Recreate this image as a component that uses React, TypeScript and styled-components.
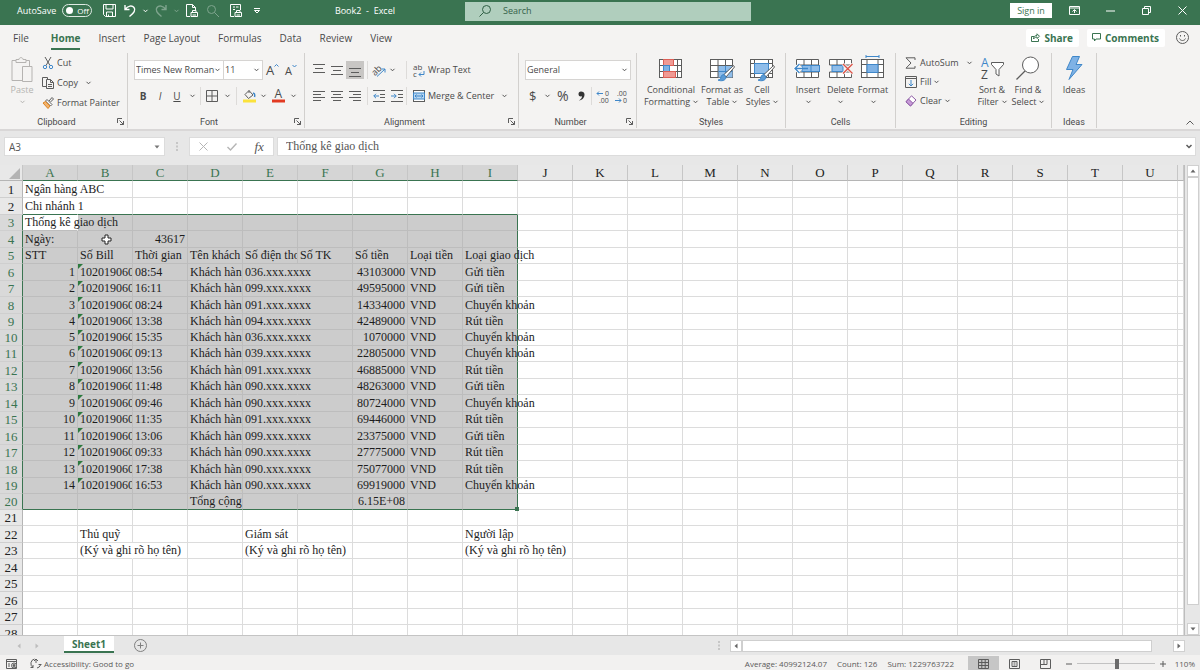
import React from 'react';
import styled, { createGlobalStyle, css } from 'styled-components';

const green = '#3a7451';
const ink = '#4a4a4a';
const blue = '#3f87c9';
const uiFont = "'Open Sans', 'Liberation Sans', sans-serif";
const labelFont = "Roboto, 'Liberation Sans', sans-serif";
const sheetFont = "'Liberation Serif', serif";

const Global = createGlobalStyle`
  * { box-sizing: border-box; }
  body { margin: 0; font-family: ${uiFont}; font-size: 9px; line-height: 12px; color: ${ink}; }
  button, input, select { font: inherit; color: inherit; margin: 0; padding: 0; border: 0; background: none; border-radius: 0; outline: none; }
  button { display: inline-flex; align-items: center; justify-content: center; white-space: nowrap; }
  svg { display: block; flex: none; overflow: visible; }
`;

/* ---------- shell ---------- */
const Window = styled.div`
  display: flex;
  flex-direction: column;
  height: 100vh;
  overflow: hidden;
  background: #e7e7e7;
`;

/* ---------- title bar ---------- */
const TitleBar = styled.header`
  display: grid;
  grid-template-columns: 465fr 286fr 449fr;
  align-items: center;
  height: 25px;
  flex: none;
  padding-bottom: 4px;
  background: ${green};
  color: #fff;
`;
const QuickBar = styled.div`
  display: flex;
  align-items: center;
  padding-left: 17px;
`;
const AutoSave = styled.label`
  display: flex;
  align-items: center;
  gap: 6px;
  margin-right: 10px;
`;
const Toggle = styled.span`
  display: flex;
  align-items: center;
  gap: 4px;
  width: 30px;
  height: 13px;
  padding-left: 3px;
  border: 1px solid #dfeae3;
  border-radius: 7px;
  font-size: 8px;
  input { appearance: none; width: 7px; height: 7px; border-radius: 50%; background: #fff; }
`;
const QuickButton = styled.button<{ $w: number; $dim?: boolean }>`
  width: ${(p) => p.$w}px;
  height: 18px;
  flex: none;
  opacity: ${(p) => (p.$dim ? 0.35 : 1)};
`;
const DocTitle = styled.div`
  margin-left: auto;
  padding-right: 70px;
  white-space: pre;
`;
const SearchBox = styled.label`
  display: flex;
  align-items: center;
  gap: 12px;
  height: 19px;
  padding-left: 14px;
  background: #b0cebd;
  color: #2f5f44;
  margin-top: 1px;
  input { flex: 1; min-width: 0; }
  input::placeholder { color: #35624a; opacity: 1; }
`;
const WindowControls = styled.div`
  display: flex;
  align-items: center;
  justify-content: flex-end;
`;
const SignIn = styled.button`
  width: 42px;
  height: 15px;
  margin-right: 4px;
  background: #fff;
  color: ${green};
`;
const WindowButton = styled.button`
  width: 36px;
  height: 18px;
`;

/* ---------- ribbon ---------- */
const TabRow = styled.nav`
  display: flex;
  align-items: center;
  height: 25px;
  flex: none;
  padding: 0 9px 0 13px;
  background: #f4f3f2;
`;
const RibbonTab = styled.button<{ $active?: boolean; $first?: boolean }>`
  height: 24px;
  margin-right: ${(p) => (p.$first ? 22 : 18)}px;
  font-size: 10px;
  ${(p) =>
    p.$active &&
    css`
      color: ${green};
      font-weight: 700;
      border-bottom: 2px solid ${green};
      padding-top: 2px;
    `}
`;
const TabSpacer = styled.div`
  flex: 1;
`;
const ShareButton = styled.button`
  height: 18px;
  gap: 4px;
  padding: 0 6px 0 5px;
  margin-right: 8px;
  background: #fff;
  border-radius: 2px;
  color: ${green};
  font-weight: 700;
  font-size: 10px;
`;
const Ribbon = styled.section`
  display: flex;
  height: 79px;
  flex: none;
  padding: 3px 0 1px;
  background: #f4f3f2;
`;
const Group = styled.div<{ $w: number }>`
  display: flex;
  flex-direction: column;
  width: ${(p) => p.$w}px;
  flex: none;
  border-right: 1px solid #d2d0ce;
`;
const GroupBody = styled.div<{ $pad?: number; $gap?: number }>`
  display: flex;
  flex: 1;
  padding-left: ${(p) => p.$pad ?? 0}px;
  gap: ${(p) => p.$gap ?? 0}px;
`;
const GroupFoot = styled.div`
  display: flex;
  align-items: center;
  height: 13px;
  font-family: ${labelFont};
  span { flex: 1; text-align: center; }
  button { width: 14px; height: 12px; }
`;
const Stack = styled.div<{ $gap?: number; $top?: number }>`
  display: flex;
  flex-direction: column;
  gap: ${(p) => p.$gap ?? 0}px;
  padding-top: ${(p) => p.$top ?? 0}px;
`;
const EditingList = styled(Stack)`
  width: 67px;
  flex: none;
`;
const Line = styled.div<{ $gap?: number }>`
  display: flex;
  align-items: center;
  height: 20px;
  gap: ${(p) => p.$gap ?? 0}px;
`;
const TextButton = styled.button<{ $h?: number }>`
  height: ${(p) => p.$h ?? 20}px;
  gap: 3px;
  justify-content: flex-start;
`;
const IconButton = styled.button<{ $w?: number; $on?: boolean }>`
  width: ${(p) => p.$w ?? 18}px;
  height: 18px;
  flex: none;
  font-size: 10px;
  background: ${(p) => (p.$on ? '#c8c6c4' : 'transparent')};
`;
const BigButton = styled.button<{ $w: number; $dim?: boolean }>`
  flex-direction: column;
  justify-content: flex-start;
  width: ${(p) => p.$w}px;
  flex: none;
  padding-top: 6px;
  color: ${(p) => (p.$dim ? '#b5b3b1' : ink)};
  > svg { margin-bottom: 1px; }
  span { display: flex; align-items: center; justify-content: center; gap: 3px; height: 12px; }
`;
const Combo = styled.label<{ $w: number }>`
  display: flex;
  align-items: center;
  width: ${(p) => p.$w}px;
  height: 20px;
  padding: 0 3px 0 1px;
  background: #fff;
  border: 1px solid #d6d4d2;
  & + & { border-left: 0; }
  select { appearance: none; flex: 1; min-width: 0; }
`;
const Separator = styled.i`
  width: 1px;
  height: 18px;
  background: #dddbd9;
`;
const SeparatorSlot = styled.span<{ $w: number }>`
  display: flex;
  justify-content: center;
  width: ${(p) => p.$w}px;
`;
const CollapseButton = styled.button`
  margin: auto 5px 0 auto;
  height: 12px;
  width: 10px;
`;

/* ---------- formula bar ---------- */
const FormulaBar = styled.section`
  display: flex;
  height: 36px;
  flex: none;
  padding: 6px 4px 9px;
  border-top: 2px solid #d9d7d7;
  color: #555;
  font-family: ${sheetFont};
  font-size: 12px;
`;
const WhiteField = styled.div<{ $w?: number }>`
  display: flex;
  align-items: center;
  height: 19px;
  width: ${(p) => (p.$w ? p.$w + 'px' : 'auto')};
  flex: ${(p) => (p.$w ? 'none' : '1')};
  background: #fff;
  border: 1px solid #dcdcdc;
  input { flex: 1; min-width: 0; padding-left: 4px; }
`;
const NameInput = styled.input`
  font-family: ${uiFont};
  font-size: 10px;
`;
const FormulaInput = styled.input`
  margin-left: 4px;
`;
const Slot = styled.span<{ $w: number }>`
  display: flex;
  align-items: center;
  justify-content: center;
  width: ${(p) => p.$w}px;
  flex: none;
`;
const BarButton = styled.button`
  width: 28px;
  height: 17px;
  font-size: 13px;
`;

/* ---------- sheet ---------- */
const SheetArea = styled.main`
  display: flex;
  flex: 1;
  min-height: 0;
`;
const GridView = styled.div`
  flex: 1;
  min-width: 0;
  overflow: hidden;
  background: #fff;
  border-right: 1px solid #bdbdbd;
`;
const Table = styled.table`
  table-layout: fixed;
  width: 100%;
  border-spacing: 0;
  font-family: ${sheetFont};
  font-size: 12px;
  color: #1d1d1d;
  col { width: 55px; }
  col:first-child { width: 23px; }
  col:last-child { width: auto; }
`;
const ColHead = styled.th<{ $sel?: boolean }>`
  height: 16px;
  padding: 0;
  font-size: 13px;
  line-height: 15px;
  font-weight: 400;
  color: ${(p) => (p.$sel ? green : '#222')};
  background: ${(p) => (p.$sel ? '#d5d5d5' : '#e8e8e8')};
  border-right: 1px solid #c6c6c6;
  border-bottom: 1px solid ${(p) => (p.$sel ? green : '#b5b5b5')};
`;
const Corner = styled(ColHead)`
  svg { margin: 1px 2px 0 auto; }
`;
const Row = styled.tr`
  height: 16px;
  &:first-child, &:nth-child(even) { height: 17px; }
  &:nth-child(10n) { height: 16px; }
`;
const RowHead = styled.th<{ $sel?: boolean }>`
  padding: 0;
  font-size: 13px;
  line-height: 15px;
  font-weight: 400;
  color: ${(p) => (p.$sel ? green : '#222')};
  background: ${(p) => (p.$sel ? '#d9d9d9' : '#e8e8e8')};
  border-right: 1px solid ${(p) => (p.$sel ? green : '#b5b5b5')};
  border-bottom: 1px solid #cfcfcf;
`;
interface CellProps {
  $sel?: boolean;
  $active?: boolean;
  $spill?: boolean;
  $edgeRight?: boolean;
  $edgeBottom?: boolean;
  $flag?: boolean;
  $anchor?: boolean;
}
const Cell = styled.td<CellProps>`
  position: ${(p) => (p.$anchor || p.$flag ? 'relative' : 'static')};
  padding: 0;
  background: ${(p) => (p.$sel && !p.$active ? '#cccccc' : 'transparent')};
  border-right: 1px solid
    ${(p) => (p.$edgeRight ? green : p.$spill ? 'transparent' : p.$sel ? '#bdbdbd' : '#dcdcdc')};
  border-bottom: 1px solid ${(p) => (p.$edgeBottom ? green : p.$sel ? '#bdbdbd' : '#dcdcdc')};
  ${(p) =>
    p.$flag &&
    css`
      &::before {
        content: '';
        position: absolute;
        left: 0;
        top: 0;
        border-top: 5px solid #2c7a3f;
        border-right: 5px solid transparent;
      }
    `}
`;
const CellText = styled.div<{ $right?: boolean; $clip?: boolean }>`
  height: 15px;
  line-height: 15px;
  padding: 0 2px;
  white-space: nowrap;
  text-align: ${(p) => (p.$right ? 'right' : 'left')};
  overflow: ${(p) => (p.$clip ? 'hidden' : 'visible')};
`;
const FillHandle = styled.i`
  position: absolute;
  right: -2px;
  bottom: -2px;
  width: 4px;
  height: 4px;
  background: ${green};
`;
const Pointer = styled.span`
  position: absolute;
  left: 50%;
  top: 50%;
  transform: translate(-4px, -5px);
`;

/* ---------- scrollbars, tabs, status ---------- */
const VScroll = styled.div`
  display: flex;
  flex-direction: column;
  width: 13px;
  margin-left: 2px;
`;
const ScrollButton = styled.button`
  width: 12px;
  height: 12px;
  flex: none;
  background: #fff;
  border: 1px solid #d0d0d0;
`;
const VThumb = styled.div`
  flex: 1;
  width: 12px;
  margin-bottom: 18px;
  background: #fff;
  border: 1px solid #cfcfcf;
`;
const TabBar = styled.section`
  display: flex;
  align-items: center;
  height: 20px;
  flex: none;
  border-top: 1px solid #c4c4c4;
  padding-right: 15px;
`;
const SheetNav = styled.button`
  width: 18px;
  height: 16px;
`;
const SheetTab = styled.button`
  align-self: flex-start;
  width: 50px;
  height: 17px;
  margin: 0 20px 0 18px;
  background: #fff;
  border-bottom: 2px solid ${green};
  color: ${green};
  font-weight: 700;
  font-size: 10px;
`;
const HScroll = styled.div`
  display: flex;
  align-items: center;
  width: calc(38% + 5px);
`;
const HThumb = styled.div`
  flex: 1;
  height: 12px;
  margin-right: 21px;
  background: #fff;
  border: 1px solid #cfcfcf;
`;
const StatusBar = styled.footer`
  display: flex;
  align-items: center;
  height: 15px;
  flex: none;
  padding: 2px 5px 0 6px;
  background: #f2f1f0;
  font-size: 8px;
  color: #5a5a5a;
  overflow: hidden;
`;
const Stats = styled.div`
  display: flex;
  gap: 10px;
  margin-left: auto;
  margin-right: 14px;
`;
const ViewButton = styled.button<{ $on?: boolean }>`
  width: 31px;
  height: 15px;
  background: ${(p) => (p.$on ? '#c6c6c6' : 'transparent')};
`;
const ZoomSlider = styled.input`
  appearance: none;
  width: 78px;
  height: 12px;
  margin: 0 4px;
  background: linear-gradient(#c2c2c2, #c2c2c2) center / 100% 1px no-repeat;
  &::-webkit-slider-thumb { appearance: none; width: 4px; height: 10px; background: #6b6b6b; }
`;
const ZoomButton = styled.button`
  width: 8px;
`;
const ZoomLevel = styled.span`
  width: 28px;
  text-align: right;
`;

/* ---------- icons ---------- */
interface IconProps {
  w: number;
  h?: number;
  children: React.ReactNode;
  color?: string;
}
const Icon = ({ w, h = w, children, color = '#5c5c5c' }: IconProps) => (
  <svg width={w} height={h} viewBox={`0 0 ${w} ${h}`} fill="none" stroke={color} strokeWidth="1" aria-hidden="true">
    {children}
  </svg>
);
const Chevron = ({ color = '#555' }: { color?: string }) => (
  <Icon w={5} h={4} color={color}>
    <path d="M.5 .8 2.5 2.8 4.5 .8" />
  </Icon>
);
const Launcher = () => (
  <Icon w={7}>
    <path d="M.5 5V.5H5M2.5 2.5l4 4M6.5 3v3.500H3" />
  </Icon>
);
const Lines = ({ kind }: { kind: string }) => {
  const d: Record<string, string> = {
    top: 'M0 .5h12M2 4.500h8M0 8.500h12',
    middle: 'M0 2.500h12M2 6.500h8M0 10.500h12',
    bottom: 'M0 4.500h12M2 8.500h8M0 12.500h12',
    left: 'M0 1.500h12M0 4.500h8M0 7.500h12M0 10.500h8',
    center: 'M0 1.500h12M2 4.500h8M0 7.500h12M2 10.500h8',
    right: 'M0 1.500h12M4 4.500h8M0 7.500h12M4 10.500h8',
  };
  return (
    <Icon w={12} h={13}>
      <path d={d[kind]} />
    </Icon>
  );
};
const Indent = ({ out }: { out?: boolean }) => (
  <Icon w={12}>
    <path d="M0 .5h12M7 4.500h5M7 7.500h5M0 11.500h12" />
    <path stroke={blue} d={out ? 'M6 6H.8M3 3.800.8 6 3 8.200' : 'M0 6h5.200M3 3.800 5.200 6 3 8.200'} />
  </Icon>
);
const Brush = () => (
  <>
    <path d="M23.500 6.500 14 15.500l2 2.500 8.500-10z" fill="#fff" />
    <path d="M14 15.500c-3 0-3 3-3.500 4-.5 1.500-2.500 1.500-2.500 1.500 3 1.500 8 .8 8-3z" fill="#5b9bd5" stroke={blue} />
  </>
);
const ConditionalIcon = () => (
  <Icon w={24} h={24}>
    <rect x=".5" y=".5" width="22" height="18" fill="#fff" />
    <path d="M.5 6.500h22M.5 12.500h22M4.500.5v18M18.500.5v18" />
    <rect x="4.500" y=".5" width="10" height="6" fill="#f09a94" stroke="#dd5f56" />
    <rect x="4.500" y="6.500" width="6" height="6" fill="#7fb2e5" stroke={blue} />
    <rect x="4.500" y="12.500" width="12" height="6" fill="#f09a94" stroke="#dd5f56" />
  </Icon>
);
const FormatTableIcon = () => (
  <Icon w={24} h={24}>
    <rect x=".5" y=".5" width="22" height="18" fill="#fff" />
    <rect x="8" y="6.500" width="14.500" height="12" fill="#8fbdea" stroke="none" />
    <path d="M.5 6.500h22M.5 12.500H8M8 .5v18M15.500.5v6" />
    <path d="M8.500 12.500h14M15.500 6.500v12" stroke={blue} />
    <Brush />
  </Icon>
);
const CellStylesIcon = () => (
  <Icon w={24} h={24}>
    <rect x=".5" y=".5" width="22" height="18" fill="#fff" />
    <path d="M.5 4.500h22M.5 14.500h22M4.500.5v18M18.500.5v18" />
    <rect x="4.500" y="4.500" width="14" height="10" fill="#8fbdea" stroke={blue} />
    <Brush />
  </Icon>
);
const splitGrid = 'M.5 6V.5h22V6M.5 13v5.500h22V13M8 .5V6M15.500.5V6M8 13v5.500M15.500 13v5.500M.5 6h22M.5 13h22';
const InsertIcon = () => (
  <Icon w={24} h={24}>
    <path d={splitGrid} fill="#fff" />
    <rect x="6" y="6.500" width="17.500" height="6" fill="#8fbdea" stroke={blue} />
    <path d="M15 6.500v6" stroke={blue} />
    <path d="M6 9.500H-1M3.500 5l-4.500 4.500L3.500 14" stroke="#fff" strokeWidth="3" />
    <path d="M12 9.500H-1M3.500 5l-4.500 4.500L3.500 14" stroke={blue} strokeWidth="1.300" />
  </Icon>
);
const DeleteIcon = () => (
  <Icon w={24} h={24}>
    <path d={splitGrid} fill="#fff" />
    <rect x="3" y="6.500" width="11" height="6" fill="#8fbdea" stroke={blue} />
    <path d="m14 5 9.500 9.500M23.500 5 14 14.500" stroke="#f4f3f2" strokeWidth="3" />
    <path d="m14 5 9.500 9.500M23.500 5 14 14.500" stroke="#dd5247" strokeWidth="1.300" />
  </Icon>
);
const FormatIcon = () => (
  <Icon w={24} h={24}>
    <rect x=".5" y=".5" width="22" height="18" fill="#fff" />
    <path d="M.5 5.500h22M.5 13.500h22M6 .5v18M17 .5v18" />
    <rect x="6" y="5.500" width="11" height="8" fill="#7fb2e5" stroke={blue} />
    <path d="M5 -2.500h13M5 -4v3M18 -4v3" stroke={blue} />
  </Icon>
);
const glyph = { stroke: 'none', fill: '#4a4a4a', fontFamily: uiFont } as const;

/* ---------- sheet data ---------- */
const columns = 'ABCDEFGHIJKLMNOPQRSTU'.split('');
type Entry = [string, string, string, string];
const entries: Entry[] = [
  ['08:54', '036.xxx.xxxx', '43103000', 'Gửi tiền'],
  ['16:11', '099.xxx.xxxx', '49595000', 'Gửi tiền'],
  ['08:24', '091.xxx.xxxx', '14334000', 'Chuyển khoản'],
  ['13:38', '094.xxx.xxxx', '42489000', 'Rút tiền'],
  ['15:35', '036.xxx.xxxx', '1070000', 'Chuyển khoản'],
  ['09:13', '039.xxx.xxxx', '22805000', 'Chuyển khoản'],
  ['13:56', '091.xxx.xxxx', '46885000', 'Rút tiền'],
  ['11:48', '090.xxx.xxxx', '48263000', 'Gửi tiền'],
  ['09:46', '090.xxx.xxxx', '80724000', 'Chuyển khoản'],
  ['11:35', '091.xxx.xxxx', '69446000', 'Rút tiền'],
  ['13:06', '099.xxx.xxxx', '23375000', 'Gửi tiền'],
  ['09:33', '090.xxx.xxxx', '27775000', 'Rút tiền'],
  ['17:38', '090.xxx.xxxx', '75077000', 'Rút tiền'],
  ['16:53', '090.xxx.xxxx', '69919000', 'Chuyển khoản'],
];
const signature = '(Ký và ghi rõ họ tên)';
const cells: Record<string, string> = {
  A1: 'Ngân hàng ABC',
  A2: 'Chi nhánh 1',
  A3: 'Thống kê giao dịch',
  A4: 'Ngày:',
  C4: '43617',
  A5: 'STT',
  B5: 'Số Bill',
  C5: 'Thời gian',
  D5: 'Tên khách hàng',
  E5: 'Số điện thoại',
  F5: 'Số TK',
  G5: 'Số tiền',
  H5: 'Loại tiền',
  I5: 'Loại giao dịch',
  D20: 'Tổng cộng',
  G20: '6.15E+08',
  B22: 'Thủ quỹ',
  E22: 'Giám sát',
  I22: 'Người lập',
  B23: signature,
  E23: signature,
  I23: signature,
};
entries.forEach(([time, phone, amount, kind], i) => {
  const r = i + 6;
  cells[`A${r}`] = String(i + 1);
  cells[`B${r}`] = '102019060';
  cells[`C${r}`] = time;
  cells[`D${r}`] = 'Khách hàng';
  cells[`E${r}`] = phone;
  cells[`G${r}`] = amount;
  cells[`H${r}`] = 'VND';
  cells[`I${r}`] = kind;
});
const spills = new Set(['A1', 'A2', 'A3', 'B23', 'E23', 'I23']);
for (let r = 6; r < 20; r++) spills.add(`E${r}`);
const isRight = (id: string, r: number) =>
  id === 'C4' || (r > 5 && r < 21 && (id[0] === 'A' || id[0] === 'G'));

const Sheet = () => (
  <Table>
    <colgroup>
      {Array.from({ length: 23 }, (_, i) => (
        <col key={i} />
      ))}
    </colgroup>
    <thead>
      <tr>
        <Corner aria-label="Select all">
          <Icon w={11} h={11}>
            <path d="M11 0v11H0z" fill="#b4b4b4" stroke="none" />
          </Icon>
        </Corner>
        {columns.map((c, i) => (
          <ColHead key={c} scope="col" $sel={i < 9}>
            {c}
          </ColHead>
        ))}
        <ColHead />
      </tr>
    </thead>
    <tbody>
      {Array.from({ length: 28 }, (_, n) => {
        const r = n + 1;
        const rowSel = r > 2 && r < 21;
        return (
          <Row key={r}>
            <RowHead scope="row" $sel={rowSel}>
              {r}
            </RowHead>
            {columns.map((c, i) => {
              const id = c + r;
              const sel = rowSel && i < 9;
              const text = cells[id];
              return (
                <Cell
                  key={c}
                  $sel={sel}
                  $active={id === 'A3'}
                  $spill={spills.has(id)}
                  $edgeRight={rowSel && c === 'I'}
                  $edgeBottom={(r === 2 || r === 20) && i < 9}
                  $flag={c === 'B' && r > 5 && r < 20}
                  $anchor={id === 'I20' || id === 'B4'}
                >
                  {text && (
                    <CellText $right={isRight(id, r)} $clip={columns[i + 1] + r in cells}>
                      {text}
                    </CellText>
                  )}
                  {id === 'I20' && <FillHandle />}
                  {id === 'B4' && (
                    <Pointer>
                      <Icon w={11} h={11} color="#222">
                        <path d="M4 1h3v3h3v3H7v3H4V7H1V4h3z" fill="#fff" />
                      </Icon>
                    </Pointer>
                  )}
                </Cell>
              );
            })}
            <Cell />
          </Row>
        );
      })}
    </tbody>
  </Table>
);

const TopBar = () => (
  <TitleBar>
    <QuickBar>
      <AutoSave>
        AutoSave
        <Toggle>
          <input type="checkbox" />
          Off
        </Toggle>
      </AutoSave>
      <QuickButton $w={14} aria-label="Save">
        <Icon w={13} color="#fff">
          <path d="M.5.5h12v12H2.500l-2-2zM3 .5v4.500h7V.5M3.500 12.500V8h6v4.500M5.500 12.500v-2" />
        </Icon>
      </QuickButton>
      <QuickButton $w={27} aria-label="Undo">
        <Icon w={12} h={13} color="#fff">
          <path strokeWidth="1.400" d="M1 1v4.500h4.500M1 5.500C4 1.500 8 1 10 3.500S10 9 5.500 12.500" />
        </Icon>
      </QuickButton>
      <Chevron color="#fff" />
      <QuickButton $w={26} $dim aria-label="Redo">
        <Icon w={12} h={13} color="#fff">
          <path strokeWidth="1.400" d="M11 1v4.500H6.500M11 5.500C8 1.500 4 1 2 3.500S2 9 6.500 12.500" />
        </Icon>
      </QuickButton>
      <QuickButton $w={5} $dim aria-label="Redo options">
        <Chevron color="#fff" />
      </QuickButton>
      <QuickButton $w={26} aria-label="Quick print">
        <Icon w={12} h={14} color="#fff">
          <path d="M4 12.500H.5V.5h6l3 3V6M6.500.5v3h3M5 8.500h6.500v4H5zM6.500 8.500V6.500h3.500v2M6.500 11h3.500" />
        </Icon>
      </QuickButton>
      <QuickButton $w={16} $dim aria-label="Print preview">
        <Icon w={12} color="#fff">
          <circle cx="4.500" cy="4.500" r="4" />
          <path d="m7.500 7.500 4.500 4.500" />
        </Icon>
      </QuickButton>
      <QuickButton $w={30} aria-label="Page setup">
        <Icon w={12} h={14} color="#fff">
          <path d="M4 12.500H.5V.5h10V6M3 3h2M6 3h2.500M3 5.500h2M5 8.500h6.500v4H5zM6.500 8.500V6.500h3.500v2M6.500 11h3.500" />
        </Icon>
      </QuickButton>
      <QuickButton $w={12} aria-label="Customize toolbar">
        <Icon w={6} h={6} color="#fff">
          <path d="M0 .5h6M.5 2.500 3 5l2.500-2.500z" />
        </Icon>
      </QuickButton>
      <DocTitle>{'Book2  -  Excel'}</DocTitle>
    </QuickBar>
    <SearchBox>
      <Icon w={12} color="#2f5f44">
        <circle cx="7.500" cy="4.500" r="4" />
        <path d="M4.500 7.500.5 11.500" />
      </Icon>
      <input type="text" placeholder="Search" aria-label="Search" />
    </SearchBox>
    <WindowControls>
      <SignIn>Sign in</SignIn>
      <WindowButton aria-label="Ribbon display options">
        <Icon w={11} h={9} color="#fff">
          <path d="M.5.5h10v8H.5zM.5 2h10M5.500 7V4M3.500 5.500l2-2 2 2" />
        </Icon>
      </WindowButton>
      <WindowButton aria-label="Minimize">
        <Icon w={9} h={2} color="#fff">
          <path d="M0 1h9" />
        </Icon>
      </WindowButton>
      <WindowButton aria-label="Restore">
        <Icon w={9} color="#fff">
          <path d="M.5 2.500h6v6h-6zM2.500 2.500v-2h6v6h-2" />
        </Icon>
      </WindowButton>
      <WindowButton aria-label="Close">
        <Icon w={9} color="#fff">
          <path d="m.5.5 8 8M8.500.5l-8 8" />
        </Icon>
      </WindowButton>
    </WindowControls>
  </TitleBar>
);

const Tabs = () => (
  <TabRow>
    <RibbonTab $first>File</RibbonTab>
    <RibbonTab $active>Home</RibbonTab>
    {['Insert', 'Page Layout', 'Formulas', 'Data', 'Review', 'View'].map((t) => (
      <RibbonTab key={t}>{t}</RibbonTab>
    ))}
    <TabSpacer />
    <ShareButton>
      <Icon w={9} color={green}>
        <path d="M3 3.500H.5v5h7V6M2.500 6c0-2.500 1.500-3.500 3.500-3.500V.8L8.500 3.300 6 5.500V4C4.500 4 3.500 4.500 2.500 6z" />
      </Icon>
      Share
    </ShareButton>
    <ShareButton>
      <Icon w={9} color={green}>
        <path d="M.5.5h8v5.500H4L2.500 8V6h-2z" />
      </Icon>
      Comments
    </ShareButton>
    <IconButton aria-label="Feedback">
      <Icon w={13}>
        <circle cx="6.500" cy="6.500" r="6" />
        <path d="M4.500 4v1.500M8.500 4v1.500M3.500 7.500c1 2.700 5 2.700 6 0" />
      </Icon>
    </IconButton>
  </TabRow>
);

const Foot = ({ label, launcher }: { label: string; launcher?: boolean }) => (
  <GroupFoot>
    <span>{label}</span>
    {launcher && (
      <button aria-label={`${label} settings`}>
        <Launcher />
      </button>
    )}
  </GroupFoot>
);

const RibbonPanel = () => (
  <Ribbon>
    <Group $w={128}>
      <GroupBody $pad={7} $gap={5}>
        <BigButton $w={30} $dim>
          <Icon w={22} h={24} color="#b5b3b1">
            <path d="M5 1.500H1v20h10M15 1.500h3.500V7M5 3.500V.5h3c0-2.500 4-2.500 4 0h3v3zM11.500 7.500h9.500v15h-9.500z" />
          </Icon>
          <span>Paste</span>
          <span><Chevron color="#b5b3b1" /></span>
        </BigButton>
        <Stack>
          <TextButton>
            <Icon w={12} h={12}>
              <path d="M3 0l5 8.500M9 0 4 8.500" />
              <circle cx="3" cy="10" r="1.700" stroke={blue} />
              <circle cx="9" cy="10" r="1.700" stroke={blue} />
            </Icon>
            Cut
          </TextButton>
          <TextButton>
            <Icon w={12} h={12}>
              <path d="M4 9.500H.5v-9H5.500V2M4.500 2.500h4l3 3v6h-7zM8.500 2.500v3h3M6 7.500h4M6 9.500h4" />
            </Icon>
            Copy
            <Slot $w={2} />
            <Chevron />
          </TextButton>
          <TextButton>
            <Icon w={12} h={12}>
              <path d="m7 4 3-3.500 1.500 1.500L8.500 5" />
              <path d="M5 2.500 10 7.500 8.500 9 3.500 4z" fill="#fff" />
              <path d="M3.500 4.500 1 6l5 5.500 2-2.500z" fill="#f3b26b" stroke="#d98324" />
            </Icon>
            Format Painter
          </TextButton>
        </Stack>
      </GroupBody>
      <Foot label="Clipboard" launcher />
    </Group>

    <Group $w={177}>
      <GroupBody $pad={6}>
        <Stack $top={7} $gap={6}>
          <Line>
            <Combo $w={90}>
              <select aria-label="Font">
                <option>Times New Roman</option>
              </select>
              <Chevron />
            </Combo>
            <Combo $w={39}>
              <select aria-label="Font size">
                <option>11</option>
              </select>
              <Chevron />
            </Combo>
            <IconButton aria-label="Increase font size">
              <Icon w={14} h={14}>
                <text x="1" y="12" fontSize="13" {...glyph}>A</text>
                <path d="m9.500 3.500 2-2 2 2" stroke={blue} />
              </Icon>
            </IconButton>
            <IconButton aria-label="Decrease font size">
              <Icon w={12} h={14}>
                <text x="1" y="12" fontSize="11" {...glyph}>A</text>
                <path d="m8.500 2 2 2 2-2" stroke={blue} />
              </Icon>
            </IconButton>
          </Line>
          <Line>
            <IconButton aria-label="Bold"><b>B</b></IconButton>
            <IconButton $w={16} aria-label="Italic"><i>I</i></IconButton>
            <IconButton aria-label="Underline"><u>U</u></IconButton>
            <IconButton $w={12} aria-label="Underline options"><Chevron /></IconButton>
            <SeparatorSlot $w={4}><Separator /></SeparatorSlot>
            <IconButton $w={20} aria-label="Borders">
              <Icon w={12}>
                <path d="M.5.5h11v11H.5zM6 .5v11M.5 6h11" />
              </Icon>
            </IconButton>
            <IconButton $w={10} aria-label="Border options"><Chevron /></IconButton>
            <SeparatorSlot $w={8}><Separator /></SeparatorSlot>
            <IconButton aria-label="Fill color">
              <Icon w={13} h={14}>
                <path d="M6 1.500 10 6 5.500 9.500 2 5.500zM6 1.500V4" />
                <path d="M10 4c2 .5 2 2 1.500 4" stroke={blue} strokeWidth="1.500" />
                <path d="M0 12h13" stroke="#fbe23c" strokeWidth="3" />
              </Icon>
            </IconButton>
            <IconButton $w={10} aria-label="Fill options"><Chevron /></IconButton>
            <IconButton $w={20} aria-label="Font color">
              <Icon w={13} h={14}>
                <text x="2.500" y="9" fontSize="12" {...glyph}>A</text>
                <path d="M0 12h13" stroke="#e23a22" strokeWidth="3" />
              </Icon>
            </IconButton>
            <IconButton $w={10} aria-label="Font color options"><Chevron /></IconButton>
          </Line>
        </Stack>
      </GroupBody>
      <Foot label="Font" launcher />
    </Group>

    <Group $w={214}>
      <GroupBody $pad={5}>
        <Stack $top={7} $gap={6}>
          <Line>
            <IconButton aria-label="Top align"><Lines kind="top" /></IconButton>
            <IconButton aria-label="Middle align"><Lines kind="middle" /></IconButton>
            <IconButton $on aria-label="Bottom align"><Lines kind="bottom" /></IconButton>
            <SeparatorSlot $w={6}><Separator /></SeparatorSlot>
            <IconButton aria-label="Orientation">
              <Icon w={13}>
                <text x="-2" y="9" fontSize="9" transform="rotate(-45 4 6)" {...glyph}>ab</text>
                <path d="M4 12.500 12 5M8.500 5H12v3.500" stroke={blue} />
              </Icon>
            </IconButton>
            <IconButton $w={8} aria-label="Orientation options"><Chevron /></IconButton>
          </Line>
          <Line>
            <IconButton aria-label="Align left"><Lines kind="left" /></IconButton>
            <IconButton aria-label="Center"><Lines kind="center" /></IconButton>
            <IconButton aria-label="Align right"><Lines kind="right" /></IconButton>
            <SeparatorSlot $w={6}><Separator /></SeparatorSlot>
            <IconButton aria-label="Decrease indent"><Indent out /></IconButton>
            <IconButton aria-label="Increase indent"><Indent /></IconButton>
          </Line>
        </Stack>
        <Stack $top={7} $gap={6}>
          <Line $gap={6}>
            <Separator />
            <TextButton>
              <Icon w={12} h={13}>
                <text x="0" y="6" fontSize="8" {...glyph}>ab</text>
                <text x="0" y="13" fontSize="8" {...glyph}>c</text>
                <path d="M11 7v3.500H6M8 8.500l-2 2 2 2" stroke={blue} />
              </Icon>
              Wrap Text
            </TextButton>
          </Line>
          <Line $gap={6}>
            <Separator />
            <TextButton>
              <Icon w={12}>
                <rect x=".5" y=".5" width="11" height="11" fill="#fff" />
                <rect x=".5" y="3" width="11" height="6" fill="#b9d7f2" stroke={blue} />
                <path d="M2 6h8M3.500 4.500 2 6l1.500 1.500M8.500 4.500 10 6 8.500 7.500" stroke={blue} />
              </Icon>
              Merge &amp; Center
            </TextButton>
            <IconButton $w={8} aria-label="Merge options"><Chevron /></IconButton>
          </Line>
        </Stack>
      </GroupBody>
      <Foot label="Alignment" launcher />
    </Group>

    <Group $w={118}>
      <GroupBody $pad={6}>
        <Stack $top={7} $gap={6}>
          <Line>
            <Combo $w={106}>
              <select aria-label="Number format">
                <option>General</option>
              </select>
              <Chevron />
            </Combo>
          </Line>
          <Line>
            <IconButton $w={16} aria-label="Currency">
              <Icon w={8} h={14}>
                <text x="0" y="12" fontSize="13" {...glyph}>$</text>
              </Icon>
            </IconButton>
            <IconButton $w={12} aria-label="Currency options"><Chevron /></IconButton>
            <IconButton $w={20} aria-label="Percent">
              <Icon w={12} h={14}>
                <text x="0" y="12" fontSize="14" {...glyph}>%</text>
              </Icon>
            </IconButton>
            <IconButton $w={16} aria-label="Comma style">
              <Icon w={7} h={10}>
                <path d="M3 .5a2.500 2.500 0 0 0 0 5c.7 0 1-.2 1-.2C4 7 3 8.500 1 9.500 4.500 9 6.500 6.500 6.500 3.500 6.500 1.500 5 .5 3 .5z" fill="#333" stroke="none" />
              </Icon>
            </IconButton>
            <SeparatorSlot $w={5}><Separator /></SeparatorSlot>
            <IconButton aria-label="Increase decimal">
              <Icon w={12} h={13}>
                <text x="8" y="6" fontSize="7" {...glyph}>0</text>
                <text x="2" y="13" fontSize="7" {...glyph}>.00</text>
                <path d="M6 3.500H0M2 1.500l-2 2 2 2" stroke={blue} />
              </Icon>
            </IconButton>
            <IconButton aria-label="Decrease decimal">
              <Icon w={12} h={13}>
                <text x="2" y="6" fontSize="7" {...glyph}>.00</text>
                <text x="8" y="13" fontSize="7" {...glyph}>0</text>
                <path d="M0 10.500h6M4 8.500l2 2-2 2" stroke={blue} />
              </Icon>
            </IconButton>
          </Line>
        </Stack>
      </GroupBody>
      <Foot label="Number" launcher />
    </Group>

    <Group $w={149}>
      <GroupBody $pad={5}>
        <BigButton $w={58}>
          <ConditionalIcon />
          <span>Conditional</span>
          <span>Formatting <Chevron /></span>
        </BigButton>
        <BigButton $w={44}>
          <FormatTableIcon />
          <span>Format as</span>
          <span>Table <Chevron /></span>
        </BigButton>
        <BigButton $w={36}>
          <CellStylesIcon />
          <span>Cell</span>
          <span>Styles <Chevron /></span>
        </BigButton>
      </GroupBody>
      <Foot label="Styles" />
    </Group>

    <Group $w={110}>
      <GroupBody $pad={6}>
        <BigButton $w={32}><InsertIcon /><span>Insert</span><span><Chevron /></span></BigButton>
        <BigButton $w={33}><DeleteIcon /><span>Delete</span><span><Chevron /></span></BigButton>
        <BigButton $w={32}><FormatIcon /><span>Format</span><span><Chevron /></span></BigButton>
      </GroupBody>
      <Foot label="Cells" />
    </Group>

    <Group $w={156}>
      <GroupBody $pad={9}>
        <EditingList>
          <TextButton $h={19}>
            <Icon w={12} h={12}>
              <path d="M10 3V.8H1L6 6l-5 5.200h9V9" />
            </Icon>
            AutoSum
            <Slot $w={2} />
            <Chevron />
          </TextButton>
          <TextButton $h={19}>
            <Icon w={12}>
              <path d="M.5.5h11v11H.5zM.5 2.500h11" />
              <path d="M6 4v6M3.800 7.800 6 10l2.200-2.200" stroke={blue} />
            </Icon>
            Fill <Chevron />
          </TextButton>
          <TextButton $h={19}>
            <Icon w={12}>
              <path d="M6.500.8 11 5 5.500 11 1 6.800z" fill="#fff" stroke="#8e5aa5" />
              <path d="M3.500 4 8 8.300 5.500 11 1 6.800z" fill="#c79bd8" stroke="#8e5aa5" />
            </Icon>
            Clear <Chevron />
          </TextButton>
        </EditingList>
        <BigButton $w={40}>
          <Icon w={24} h={24}>
            <text x="1" y="8" fontSize="12" {...glyph} fill={blue}>A</text>
            <text x="1" y="20" fontSize="12" {...glyph}>Z</text>
            <path d="M11.500 3.500h12v2L19 10.500v6.500l-3-2v-4.500l-4.500-5z" fill="#fff" />
          </Icon>
          <span>Sort &amp;</span>
          <span>Filter <Chevron /></span>
        </BigButton>
        <BigButton $w={32}>
          <Icon w={24} h={24}>
            <circle cx="14.500" cy="6" r="8" fill="#fff" />
            <path d="M9 12 .5 20.500" strokeWidth="1.300" />
          </Icon>
          <span>Find &amp;</span>
          <span>Select <Chevron /></span>
        </BigButton>
      </GroupBody>
      <Foot label="Editing" />
    </Group>

    <Group $w={45}>
      <GroupBody $pad={4}>
        <BigButton $w={36}>
          <Icon w={18} h={24}>
            <path d="M7.500-2.500h7L11 5.500h6L4 20.500l4-10H1.500z" fill="#7fb2e5" stroke={blue} />
          </Icon>
          <span>Ideas</span>
        </BigButton>
      </GroupBody>
      <Foot label="Ideas" />
    </Group>
    <CollapseButton aria-label="Collapse ribbon">
      <Icon w={8} h={5}>
        <path d="m.5 4.500 3.500-3.500 3.500 3.500" />
      </Icon>
    </CollapseButton>
  </Ribbon>
);

const Dots = () => (
  <Icon w={2} h={9}>
    <path d="M1 0v2M1 3.500v2M1 7v2" stroke="#a5a5a5" />
  </Icon>
);
const Arrow = ({ d, color = '#666' }: { d: string; color?: string }) => (
  <Icon w={6}>
    <path d={d} fill={color} stroke="none" />
  </Icon>
);

const App = () => (
  <Window>
    <Global />
    <TopBar />
    <Tabs />
    <RibbonPanel />
    <FormulaBar>
      <WhiteField $w={161}>
        <NameInput aria-label="Name box" defaultValue="A3" />
        <Slot $w={14}>
          <Arrow d="M.5 1.500h5L3 4.500z" color="#777" />
        </Slot>
      </WhiteField>
      <Slot $w={24}>
        <Dots />
      </Slot>
      <WhiteField $w={85}>
        <BarButton aria-label="Cancel">
          <Icon w={9} color="#b5b5b5"><path d="m.5.5 8 8M8.500.5l-8 8" /></Icon>
        </BarButton>
        <BarButton aria-label="Enter">
          <Icon w={10} h={8} color="#b5b5b5"><path d="m.5 4 3 3 6-6.500" strokeWidth="1.400" /></Icon>
        </BarButton>
        <BarButton aria-label="Insert function"><i>fx</i></BarButton>
      </WhiteField>
      <Slot $w={3} />
      <WhiteField>
        <FormulaInput aria-label="Formula" defaultValue="Thống kê giao dịch" />
        <Slot $w={12}>
          <Icon w={6} h={5}><path d="m.5 1 2.500 2.500L5.500 1" strokeWidth="1.500" /></Icon>
        </Slot>
      </WhiteField>
    </FormulaBar>
    <SheetArea>
      <GridView>
        <Sheet />
      </GridView>
      <VScroll>
        <ScrollButton aria-label="Scroll up"><Arrow d="M.5 4.500h5L3 1.500z" /></ScrollButton>
        <VThumb />
        <ScrollButton aria-label="Scroll down"><Arrow d="M.5 1.500h5L3 4.500z" /></ScrollButton>
      </VScroll>
    </SheetArea>
    <TabBar>
      <Slot $w={10} />
      <SheetNav aria-label="Previous sheet"><Arrow d="M4.500.5v5L1.500 3z" color="#bdbdbd" /></SheetNav>
      <SheetNav aria-label="Next sheet"><Arrow d="M1.500.5v5L4.500 3z" color="#bdbdbd" /></SheetNav>
      <SheetTab>Sheet1</SheetTab>
      <button aria-label="New sheet">
        <Icon w={13} color="#808080">
          <circle cx="6.500" cy="6.500" r="6" />
          <path d="M6.500 3.500v6M3.500 6.500h6" />
        </Icon>
      </button>
      <TabSpacer />
      <Slot $w={22}>
        <Dots />
      </Slot>
      <HScroll>
        <ScrollButton aria-label="Scroll left"><Arrow d="M4.500.5v5L1.500 3z" /></ScrollButton>
        <HThumb />
        <ScrollButton aria-label="Scroll right"><Arrow d="M1.500.5v5L4.500 3z" /></ScrollButton>
      </HScroll>
    </TabBar>
    <StatusBar>
      <Icon w={12} h={10}>
        <path d="M.5.5h10v9H.5zM.5 2.500h10M2 5h2M2 7h2" />
        <circle cx="8" cy="6.500" r="2.500" fill="#f2f1f0" />
        <circle cx="8" cy="6.500" r="1" fill="#5c5c5c" />
      </Icon>
      <Slot $w={12} />
      <Icon w={14} h={11}>
        <path d="M4.500 1A4.700 4.700 0 0 0 3 9.500M3 9.500V7M3 9.500H.5M6 1v4M4 3l2-2 2 2M7 10a4.500 4.500 0 0 0 3.500-3M8.500 6.500h3" />
      </Icon>
      Accessibility: Good to go
      <Stats>
        <span>Average: 40992124.07</span>
        <span>Count: 126</span>
        <span>Sum: 1229763722</span>
      </Stats>
      <ViewButton $on aria-label="Normal view">
        <Icon w={11} h={10}><path d="M.5.5h10v9H.5zM.5 3.500h10M.5 6.500h10M3.800.5v9M7.200.5v9" /></Icon>
      </ViewButton>
      <ViewButton aria-label="Page layout view">
        <Icon w={11} h={10}><path d="M.5.5h10v9H.5zM3 2.500h5v5H3zM4.500 4h2M4.500 6h2" /></Icon>
      </ViewButton>
      <ViewButton aria-label="Page break view">
        <Icon w={11} h={10}><path d="M.5.5h10v9H.5zM.5 5.500h6.500V.5M4 .5v5" /></Icon>
      </ViewButton>
      <Slot $w={4} />
      <ZoomButton aria-label="Zoom out"><Icon w={6}><path d="M0 3h6" /></Icon></ZoomButton>
      <ZoomSlider type="range" aria-label="Zoom" min={0} max={100} defaultValue={52} />
      <ZoomButton aria-label="Zoom in"><Icon w={6}><path d="M0 3h6M3 0v6" /></Icon></ZoomButton>
      <ZoomLevel>110%</ZoomLevel>
    </StatusBar>
  </Window>
);

export default App;
